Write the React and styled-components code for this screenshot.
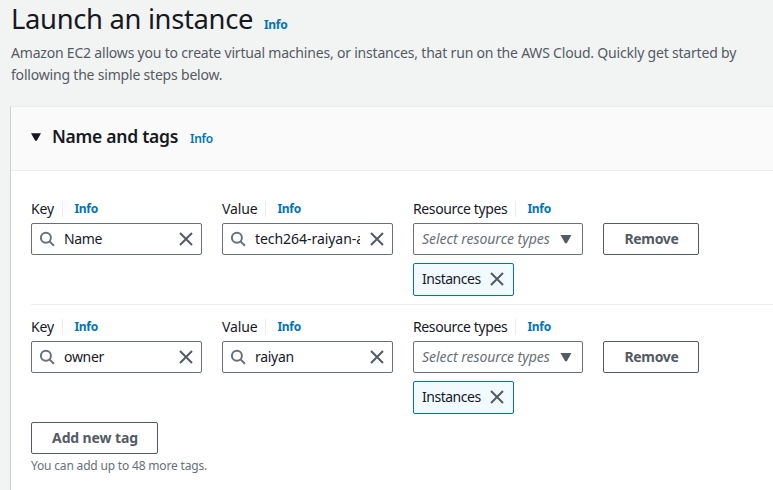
import React from 'react';
import styled, { createGlobalStyle } from 'styled-components';

const GlobalStyle = createGlobalStyle`
  * { box-sizing: border-box; }
  body {
    margin: 0;
    overflow: hidden;
    background: #f2f3f3;
    color: #16191f;
    font: 14px/22px "Noto Sans", "Open Sans", sans-serif;
  }
  button, input { font: inherit; color: inherit; margin: 0; }
`;

const Page = styled.main`
  height: 490px;
  padding-left: 10px;
  display: flex;
  flex-direction: column;
  overflow: hidden;
`;

const PageHeader = styled.header`
  height: 106px;
  flex: none;
  padding: 1px 0 0 1px;
`;

const TitleRow = styled.div`
  display: flex;
  align-items: baseline;
  height: 41px;
  white-space: nowrap;
`;

const Title = styled.h1`
  margin: 0;
  width: 253px;
  font-size: 27.4px;
  line-height: 36px;
  font-weight: 400;
  letter-spacing: -0.33px;
`;

const InfoLink = styled.a`
  color: #0073bb;
  font-size: 12px;
  line-height: 16px;
  font-weight: 700;
  letter-spacing: ${(p) => p.$spacing || '-0.3px'};
`;

const Description = styled.p`
  margin: 0;
  color: #545b64;
  letter-spacing: -0.195px;
  white-space: nowrap;
`;

const Panel = styled.section`
  flex: 1;
  background: #fff;
  border-left: 1px solid #cdd0d0;
  border-top: 1px solid #eaeded;
`;

const PanelHeader = styled.div`
  height: 64px;
  display: flex;
  align-items: center;
  padding: 0 0 4px 20px;
  background: #fafafa;
  border-bottom: 1px solid #eaeded;
`;

const PanelTitle = styled.h2`
  margin: 0 0 0 11px;
  padding-bottom: 1px;
  width: 138px;
  font-size: 17.5px;
  line-height: 22px;
  font-weight: 600;
  letter-spacing: -0.27px;
  white-space: nowrap;
`;

const PanelInfo = styled(InfoLink)`
  font-weight: 600;
  padding-top: 4px;
`;

const PanelBody = styled.div`
  padding: 27px 0 0 20px;
`;

const TagRow = styled.div`
  display: grid;
  grid-template-columns: 171px 171px 170px 96px;
  column-gap: 20px;
  padding-bottom: 8px;

  & + & {
    border-top: 1px solid #eaeded;
    padding-top: 11px;
  }
`;

const LabelRow = styled.div`
  height: 22px;
  margin-bottom: 3px;
  display: flex;
  align-items: center;
`;

const Label = styled.label`
  letter-spacing: ${(p) => p.$spacing};
  width: ${(p) => p.$width}px;
  padding-bottom: 1px;
  white-space: nowrap;
`;

const Separator = styled.span`
  width: 1px;
  height: 16px;
  margin: 0 11.5px 0 8px;
  background: #eaeded;
`;

const Control = styled.div`
  height: 32px;
  display: flex;
  align-items: center;
  padding: 0 7px;
  background: #fff;
  border: 1px solid #687078;
  border-radius: 2px;
`;

const TextInput = styled.input`
  width: 105px;
  height: 22px;
  margin: 0 10px 0 9px;
  padding: 0;
  border: 0;
  outline: 0;
  background: transparent;
  letter-spacing: ${(p) => p.$spacing};
`;

const Placeholder = styled.span`
  width: 139px;
  flex: none;
  padding-left: 1px;
  color: #687078;
  font-style: italic;
  letter-spacing: -0.02px;
  white-space: nowrap;
`;

const Token = styled.div`
  width: 101px;
  height: 33px;
  margin-top: 8px;
  padding: 0 9px 1px 8px;
  display: flex;
  align-items: center;
  justify-content: space-between;
  background: #f1faff;
  border: 1px solid #0073bb;
  border-radius: 2px;
  letter-spacing: -0.48px;
`;

const Button = styled.button`
  width: ${(p) => p.$width}px;
  height: 32px;
  padding: 0 0 0 1px;
  color: #545b64;
  background: #fff;
  border: 1px solid #545b64;
  border-radius: 2px;
  font-weight: 700;
  line-height: 22px;
  letter-spacing: ${(p) => p.$spacing};
`;

const ActionCell = styled.div`
  padding-top: 25px;
`;

const Hint = styled.p`
  margin: 1px 0 0;
  color: #687078;
  font-size: 12px;
  letter-spacing: -0.18px;
`;

const Icon = styled.svg`
  display: block;
  flex: none;
`;

const SearchIcon = () => (
  <Icon width="16" height="16" viewBox="0 0 16 16" fill="none" stroke="#687078" strokeWidth="2">
    <circle cx="6.9" cy="6.7" r="5" />
    <path d="M10.5 10.4l4.4 4.3" />
  </Icon>
);

const CloseIcon = () => (
  <Icon width="14" height="14" viewBox="0 0 14 14" fill="none" stroke="#545b64" strokeWidth="2">
    <path d="M1 1l12 12M13 1L1 13" />
  </Icon>
);

const CaretIcon = ({ color }) => (
  <Icon width="10" height="8" viewBox="0 0 10 8" fill={color}>
    <path d="M0 .3h10L5.8 7.8H4.2z" />
  </Icon>
);

const SelectCaret = () => (
  <Icon width="12" height="10" viewBox="0 0 12 10" fill="#545b64">
    <path d="M.5 1h10.9L6.8 9.2H5.1z" />
  </Icon>
);

const FieldLabel = ({ children, spacing, width }) => (
  <LabelRow>
    <Label $spacing={spacing} $width={width}>{children}</Label>
    <Separator />
    <InfoLink>Info</InfoLink>
  </LabelRow>
);

const SearchField = ({ value, spacing }) => (
  <Control>
    <SearchIcon />
    <TextInput defaultValue={value} $spacing={spacing} />
    <CloseIcon />
  </Control>
);

const tags = [
  { key: 'Name', keySpacing: '-0.4px', value: 'tech264-raiyan-app', valueSpacing: '-0.05px' },
  { key: 'owner', keySpacing: '-0.3px', value: 'raiyan', valueSpacing: '-0.3px' },
];

export default function App() {
  return (
    <>
      <GlobalStyle />
      <Page>
        <PageHeader>
          <TitleRow>
            <Title>Launch an instance</Title>
            <InfoLink>Info</InfoLink>
          </TitleRow>
          <Description>
            Amazon EC2 allows you to create virtual machines, or instances, that run on the AWS Cloud. Quickly get started by
            <br />
            following the simple steps below.
          </Description>
        </PageHeader>
        <Panel>
          <PanelHeader>
            <CaretIcon color="#16191f" />
            <PanelTitle>Name and tags</PanelTitle>
            <PanelInfo $spacing="-0.3px">Info</PanelInfo>
          </PanelHeader>
          <PanelBody>
            {tags.map((tag) => (
              <TagRow key={tag.key}>
                <div>
                  <FieldLabel spacing="-0.1px" width={23}>Key</FieldLabel>
                  <SearchField value={tag.key} spacing={tag.keySpacing} />
                </div>
                <div>
                  <FieldLabel spacing="-0.15px" width={35}>Value</FieldLabel>
                  <SearchField value={tag.value} spacing={tag.valueSpacing} />
                </div>
                <div>
                  <FieldLabel spacing="-0.38px" width={94}>Resource types</FieldLabel>
                  <Control>
                    <Placeholder>Select resource types</Placeholder>
                    <SelectCaret />
                  </Control>
                  <Token>
                    Instances
                    <CloseIcon />
                  </Token>
                </div>
                <ActionCell>
                  <Button $width={96} $spacing="-0.3px">Remove</Button>
                </ActionCell>
              </TagRow>
            ))}
            <Button $width={127} $spacing="-0.12px">Add new tag</Button>
            <Hint>You can add up to 48 more tags.</Hint>
          </PanelBody>
        </Panel>
      </Page>
    </>
  );
}
